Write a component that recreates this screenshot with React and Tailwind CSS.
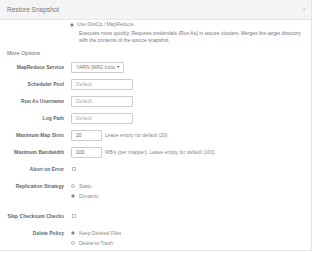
const font = { fontFamily: '"Liberation Sans", Arial, sans-serif' };

function Radio({ checked, label }) {
  return (
    <div className="flex h-[10px] items-center">
      <span className="flex h-[4px] w-[4px] items-center justify-center rounded-full border-[0.5px] border-[#bbb] bg-white">
        {checked && <span className="h-[2px] w-[2px] rounded-full bg-[#666]" />}
      </span>
      <span className="ml-[4px] text-[5px] text-[#888]">{label}</span>
    </div>
  );
}

function Check() {
  return <span className="block h-[4px] w-[4px] rounded-[0.5px] border-[0.5px] border-[#bbb] bg-white" />;
}

function Label({ children }) {
  return <div className="w-[64px] shrink-0 text-right text-[5px] font-bold text-[#666]">{children}</div>;
}

function Row({ label, children }) {
  return (
    <div className="flex h-[17px] items-center">
      <Label>{label}</Label>
      <div className="ml-[7px] flex items-center">{children}</div>
    </div>
  );
}

function TextInput({ value, placeholder, w = 'w-[62px]' }) {
  return (
    <div className={`flex h-[11px] items-center rounded-[1px] border-[0.5px] border-[#ccc] bg-white px-[4px] text-[5px] ${w} ${value ? 'text-[#666]' : 'text-[#aaa]'}`}>
      {value || placeholder}
    </div>
  );
}

export default function App() {
  return (
    <div className="h-[253px] w-[313px] overflow-hidden bg-white" style={font}>
      <div className="h-[251px] w-[312px] border-r border-b border-[#e6e6e6]">
        <div className="flex h-[20px] items-center justify-between border-b border-[#e5e5e5] bg-[#f4f4f4] pl-[7px] pr-[5px]">
          <span className="text-[6.5px] text-[#777]">Restore Snapshot</span>
          <span className="text-[6px] text-[#c8c8c8]">×</span>
        </div>

        <div className="pl-[70px] pt-[2px]">
          <div className="flex h-[6px] items-center">
            <span className="flex h-[4px] w-[4px] items-center justify-center rounded-full border-[0.5px] border-[#bbb]">
              <span className="h-[2px] w-[2px] rounded-full bg-[#666]" />
            </span>
            <span className="ml-[3px] text-[5px] text-[#888]">Use DistCp / MapReduce.</span>
          </div>
          <div className="mt-[1.5px] pl-[9px] pr-[8px] text-[5px] leading-[7px] text-[#777]">
            Executes more quickly. Requires credentials (Run As) in secure clusters. Merges the target directory with the contents of the source snapshot.
          </div>
        </div>

        <div className="mt-[5px] pl-[7px] text-[5.5px] text-[#666]">More Options</div>

        <div className="mt-[2px]">
          <Row label="MapReduce Service">
            <div className="flex h-[11px] w-[53px] items-center rounded-[1px] border-[0.5px] border-[#ccc] bg-white pl-[4px] pr-[3px] text-[5px] text-[#777]">
              <span className="min-w-0 flex-1 overflow-hidden whitespace-nowrap">YARN (MR2 Includ</span>
              <span className="ml-[2px] shrink-0 text-[3.5px] text-[#555]">▼</span>
            </div>
          </Row>
          <Row label="Scheduler Pool"><TextInput placeholder="Default" /></Row>
          <Row label="Run As Username"><TextInput placeholder="Default" /></Row>
          <Row label="Log Path"><TextInput placeholder="Default" /></Row>
          <Row label="Maximum Map Slots">
            <TextInput value="20" w="w-[31px]" />
            <span className="ml-[3px] text-[5px] text-[#888]">Leave empty for default (20).</span>
          </Row>
          <Row label="Maximum Bandwidth">
            <TextInput value="100" w="w-[31px]" />
            <span className="ml-[3px] text-[5px] text-[#888]">MB/s (per mapper). Leave empty for default (100).</span>
          </Row>
          <Row label="Abort on Error"><span className="ml-[1px]"><Check /></span></Row>

          <div className="flex py-[3.5px]">
            <div className="flex h-[10px] items-center"><Label>Replication Strategy</Label></div>
            <div className="ml-[7px]">
              <Radio label="Static" />
              <Radio checked label="Dynamic" />
            </div>
          </div>

          <div className="mt-[3px]">
            <Row label="Skip Checksum Checks"><span className="ml-[1px]"><Check /></span></Row>
          </div>

          <div className="flex pt-[3.5px]">
            <div className="flex h-[10px] items-center"><Label>Delete Policy</Label></div>
            <div className="ml-[7px]">
              <Radio checked label="Keep Deleted Files" />
              <Radio label="Delete to Trash" />
            </div>
          </div>
        </div>
      </div>
    </div>
  );
}
